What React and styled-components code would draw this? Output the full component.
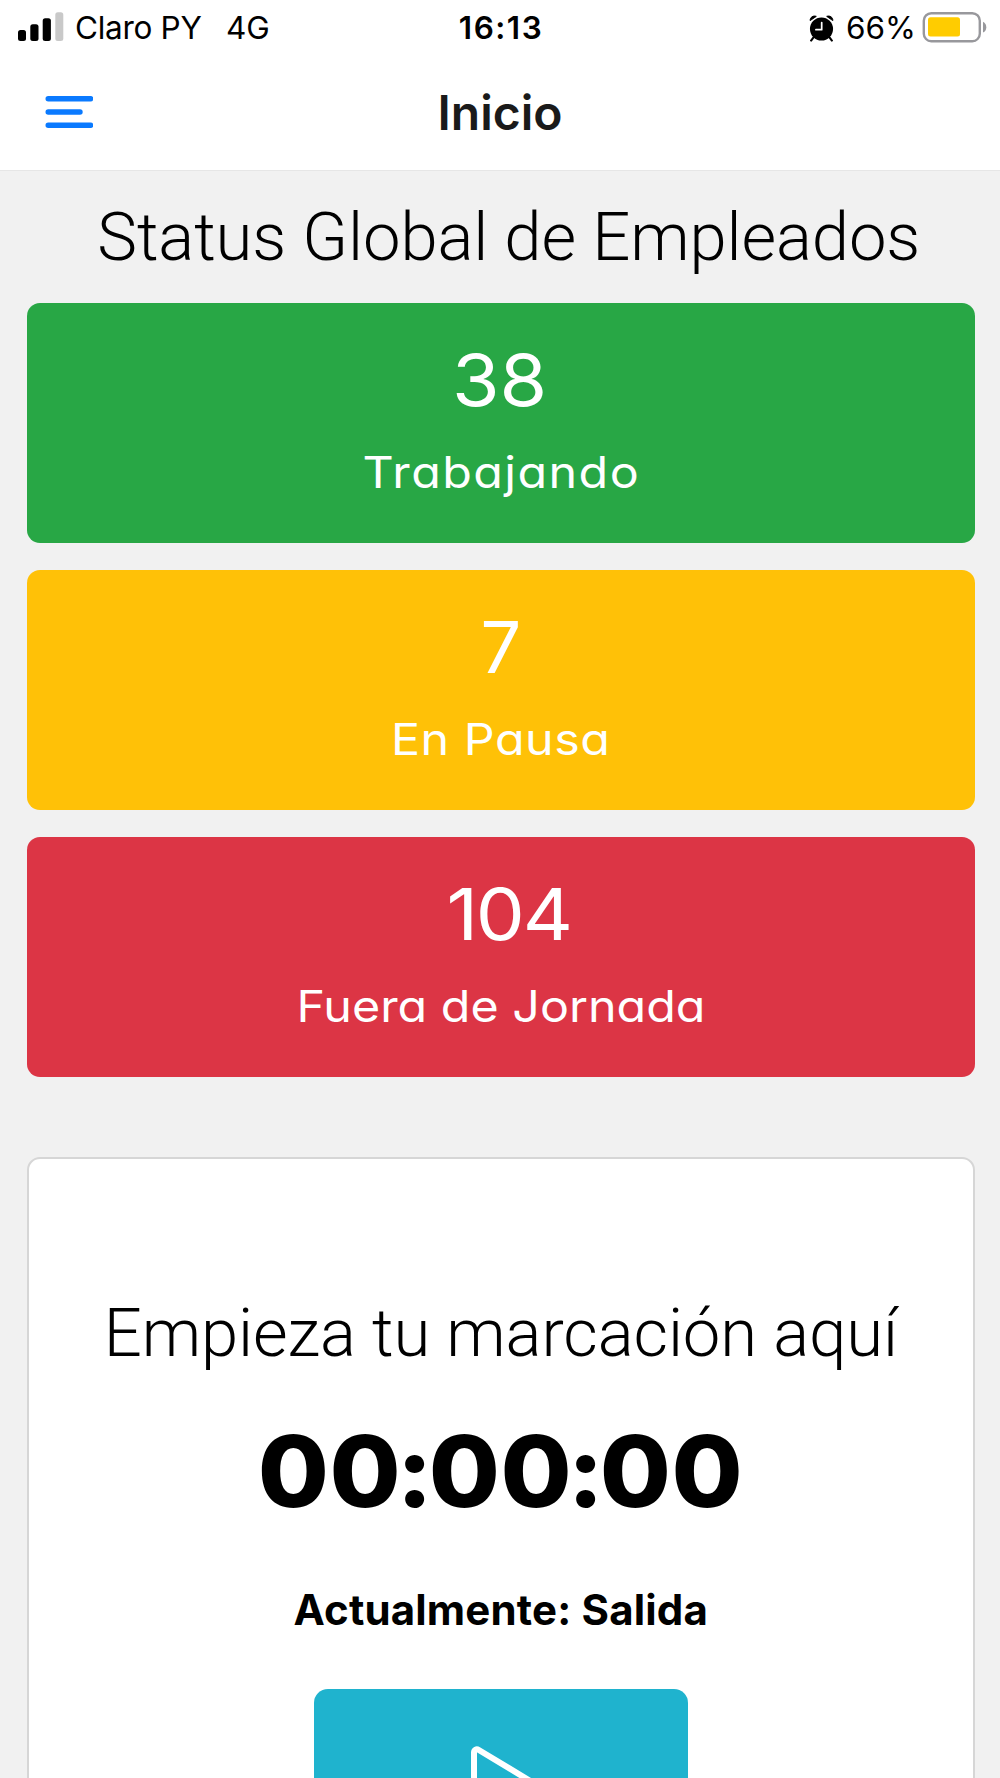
import React from 'react'
import styled, {createGlobalStyle} from 'styled-components';


const GlobalStyle = createGlobalStyle`
  * {
    box-sizing: border-box;
  }
  body {
    margin: 0;
    background: #f1f1f1;
    font-family: Inter, 'Liberation Sans', sans-serif;
    color: #000;
  }
`
const Screen = styled.div`
  width: 1000px;
  height: 1778px;
  overflow: hidden;
  background: #f1f1f1;
`
const StatusBar = styled.div`
  height: 56px;
  padding: 0 13px;
  display: grid;
  grid-template-columns: 1fr auto 1fr;
  align-items: center;
  background: #fff;
  font-size: 31.5px;
  line-height: 40px;
  white-space: pre;
`
const StatusGroup = styled.div`
  display: flex;
  align-items: center;
  justify-content: ${props => props.$end ? 'flex-end' : 'flex-start'};
`
const StatusText = styled.span`
  letter-spacing: ${props => props.$spacing || '0'};
  margin-left: ${props => props.$left || '0'};
`
const Clock = styled.span`
  padding-left: 2px;
  font-weight: 600;
  letter-spacing: 1.5px;
`
const StatusIcon = styled.svg`
  display: block;
  flex: none;
  margin-left: ${props => props.$left || '0'};
`
const NavBar = styled.header`
  height: 115px;
  padding: 0 45px;
  display: grid;
  grid-template-columns: 48px 1fr 48px;
  align-items: center;
  background: #fff;
  border-bottom: 1px solid #e6e6e6;
`
const MenuButton = styled.button`
  height: 48px;
  padding: 0;
  border: none;
  background: none;
  display: flex;
  align-items: center;
  cursor: pointer;
`
const NavTitle = styled.h1`
  margin: 0;
  font-size: 48px;
  line-height: 60px;
  font-weight: 600;
  text-align: center;
  color: #1a1a1a;
`
const Content = styled.main`
  padding: 26px 25.5px 0 27px;
`
const Heading = styled.h2`
  margin: 0;
  padding-left: ${props => props.$shift || '0'};
  font-family: Roboto, 'Liberation Sans', sans-serif;
  font-weight: 300;
  font-size: 67px;
  line-height: 80px;
  letter-spacing: -.12px;
  text-align: center;
  white-space: nowrap;
`
const CardList = styled.div`
  margin-top: 26px;
  display: flex;
  flex-direction: column;
  gap: 27.5px;
`
const Card = styled.div`
  height: 239.5px;
  padding-top: 37px;
  display: flex;
  flex-direction: column;
  align-items: center;
  gap: 25px;
  border-radius: 13px;
  background: ${props => props.$color};
  color: #fff;
`
const Count = styled.div`
  margin-left: ${props => props.$shift || '0'};
  font-size: 72px;
  line-height: 80px;
  letter-spacing: ${props => props.$spacing || '0'};
  transform: scaleX(${props => props.$stretch || 1});
`
const Label = styled.div`
  font-size: 44px;
  line-height: 54px;
  font-feature-settings: 'cv11';
  letter-spacing: ${props => props.$spacing};
  transform: scaleX(1.1);
  white-space: nowrap;
`
const Panel = styled.section`
  height: 700px;
  margin-top: 80.5px;
  padding-top: 134px;
  display: flex;
  flex-direction: column;
  align-items: center;
  background: #fff;
  border: 2px solid #d6d6d6;
  border-radius: 13px;
`
const Timer = styled.div`
  margin-top: 48px;
  font-size: 99px;
  line-height: 100px;
  font-weight: 800;
  font-feature-settings: 'calt' 0;
  letter-spacing: .6px;
  transform: scaleX(1.04);
  white-space: nowrap;
`
const Tight = styled.span`
  letter-spacing: -4.05px;
`
const Current = styled.div`
  margin-top: 62px;
  font-size: 42px;
  line-height: 54px;
  font-weight: 700;
  letter-spacing: .17px;
  white-space: nowrap;
`
const PlayButton = styled.button`
  width: 374px;
  height: 240px;
  margin-top: 52px;
  padding: 57px 0 0 8px;
  border: none;
  border-radius: 14px;
  background: #1fb3ce;
  display: flex;
  align-items: flex-start;
  justify-content: center;
  cursor: pointer;
`

const cards = [
  {count: '38', label: 'Trabajando', color: '#28a745', spacing: '1.3px', stretch: 1.07, shift: '-3px'},
  {count: '7', label: 'En Pausa', color: '#ffc107', spacing: '.45px'},
  {count: '104', label: 'Fuera de Jornada', color: '#dc3545', spacing: '0', stretch: 1.08, shift: '15px', countSpacing: '-2px'},
];

function Signal() {
  return (
    <StatusIcon width="46" height="32" viewBox="0 0 46 32" $left="5px">
      <rect x="0" y="18" width="8" height="11" rx="2.5" />
      <rect x="12.3" y="12.3" width="8.2" height="16.7" rx="2.5" />
      <rect x="24.7" y="6.3" width="8.2" height="22.7" rx="2.5" />
      <rect x="37.3" y="0.3" width="8" height="28.7" rx="2.5" fill="#c9c9c9" />
    </StatusIcon>
  )
}

function Alarm() {
  return (
    <StatusIcon width="25" height="27" viewBox="0 0 26 28">
      <circle cx="13" cy="14.5" r="12" />
      <path d="M1.2 5.8C1 2.2 4.5.2 7.6 1.4Z M24.8 5.8C25 2.2 21.5.2 18.4 1.4Z" stroke="#000" strokeLinejoin="round" />
      <path d="M4.5 23.5 2.2 26.5 M21.5 23.5 23.8 26.5" stroke="#000" strokeWidth="2.2" strokeLinecap="round" />
      <path d="M13.2 7.8V15.2H7.2" fill="none" stroke="#fff" strokeWidth="1.8" strokeLinecap="round" strokeLinejoin="round" />
    </StatusIcon>
  )
}

function Battery() {
  return (
    <StatusIcon width="65" height="32" viewBox="0 0 65 32" $left="6px">
      <rect x="1.8" y="1.2" width="56" height="28" rx="7.5" fill="#fff" stroke="#98989c" strokeWidth="2.4" />
      <rect x="6" y="5.2" width="32" height="19.3" rx="2.5" fill="#ffcc00" />
      <path d="M61 9.8C65.4 11.8 65.4 18.6 61 20.6Z" fill="#98989c" />
    </StatusIcon>
  )
}

function App() {
  return (
    <Screen>
      <GlobalStyle />
      <StatusBar>
        <StatusGroup>
          <Signal />
          <StatusText $left="11px" $spacing="-.3px">Claro PY</StatusText>
          <StatusText $left="24.5px">4G</StatusText>
        </StatusGroup>
        <Clock>16:13</Clock>
        <StatusGroup $end>
          <Alarm />
          <StatusText $left="12.5px">66%</StatusText>
          <Battery />
        </StatusGroup>
      </StatusBar>
      <NavBar>
        <MenuButton aria-label="Menu">
          <svg width="48" height="34" viewBox="0 0 48 34" fill="none" stroke="#0a7aff" strokeWidth="5.4" strokeLinecap="round">
            <path d="M3.2 2.7H45.6 M3.2 16H35 M3.2 29.3H45.6" />
          </svg>
        </MenuButton>
        <NavTitle>Inicio</NavTitle>
      </NavBar>
      <Content>
        <Heading $shift="16px">Status Global de Empleados</Heading>
        <CardList>
          {cards.map(card => (
            <Card key={card.label} $color={card.color}>
              <Count $stretch={card.stretch} $shift={card.shift} $spacing={card.countSpacing}>{card.count}</Count>
              <Label $spacing={card.spacing}>{card.label}</Label>
            </Card>
          ))}
        </CardList>
        <Panel>
          <Heading>Empieza tu marcación aquí</Heading>
          <Timer>0<Tight>0:</Tight>0<Tight>0:</Tight>00</Timer>
          <Current>Actualmente: Salida</Current>
          <PlayButton aria-label="Iniciar">
            <svg width="70" height="84" viewBox="0 0 70 84" fill="none" stroke="#fff" strokeWidth="6" strokeLinejoin="round">
              <path d="M4 6.5C4 3.5 6.5 2.6 8.8 4L64 37.3C66.5 39 66.5 43.5 64 45L8.8 79.5C6.5 81 4 79.5 4 77Z" />
            </svg>
          </PlayButton>
        </Panel>
      </Content>
    </Screen>
  )
}

export default App
